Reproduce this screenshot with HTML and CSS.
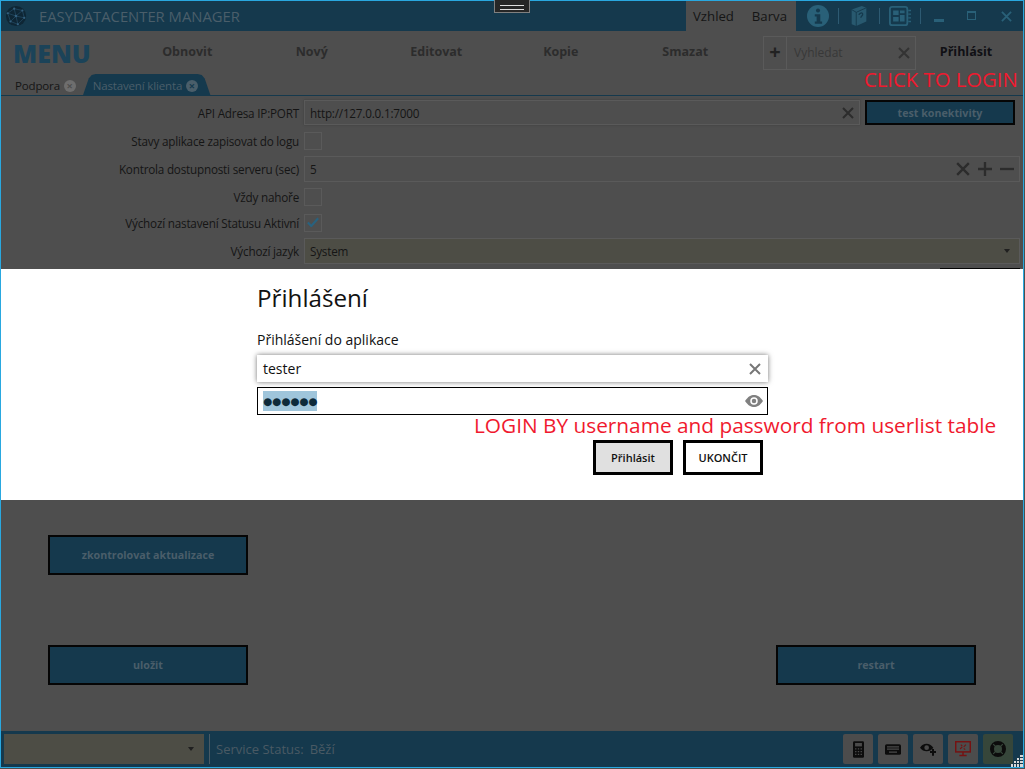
FILE: index.html
```html
<!DOCTYPE html>
<html lang="en">
<head>
    <meta charset="UTF-8">
    <meta name="viewport" content="width=device-width, initial-scale=1.0">
    <title>EasyDataCenter Manager</title>
    <link rel="stylesheet" href="styles.css">
</head>
<body>
    <div class="window">
        <header class="titlebar">
            <svg class="logo" viewBox="0 0 24 24">
                <circle cx="12" cy="12" r="11" fill="#0e2635"/>
                <path d="M3 9 L10 4 L19 6 L21 14 L14 21 L6 18 Z M10 4 L12 12 L19 6 M12 12 L21 14 M12 12 L14 21 M12 12 L6 18 M12 12 L3 9" fill="none" stroke="#244c66" stroke-width=".8"/>
                <circle cx="10" cy="4" r="1.2" fill="#33607f"/><circle cx="19" cy="6" r="1.2" fill="#33607f"/><circle cx="12" cy="12" r="1.4" fill="#33607f"/><circle cx="3" cy="9" r="1.2" fill="#33607f"/><circle cx="21" cy="14" r="1.2" fill="#33607f"/><circle cx="14" cy="21" r="1.2" fill="#33607f"/><circle cx="6" cy="18" r="1.2" fill="#33607f"/>
            </svg>
            <span class="app-name">EASYDATACENTER MANAGER</span>
            <div class="title-tabs">
                <span>Vzhled</span>
                <span>Barva</span>
            </div>
            <div class="title-icons">
                <svg class="ti" viewBox="0 0 24 24"><circle cx="12" cy="12" r="12" fill="#296078"/><circle cx="12" cy="6" r="2.200" fill="#15394d"/><path d="M8.500 10h6v8h2v2.500h-8V18h2v-5.500h-2z" fill="#15394d"/></svg>
                <i class="sep"></i>
                <svg class="ti" viewBox="0 0 24 24"><path d="M4 5 L15 1 L20 3 V18 L9 23 L4 21 Z" fill="#28596f"/><path d="M9 8 L20 3 M4 5 L9 8 V23" stroke="#15394d" fill="none"/><path d="M12 11c0-2 4-3.500 4-1 0 2-2 2-2 4" stroke="#15394d" stroke-width="1.400" fill="none"/></svg>
                <i class="sep"></i>
                <svg class="ti" viewBox="0 0 24 24"><rect x="1" y="2" width="19" height="20" rx="2.500" fill="none" stroke="#296078" stroke-width="2"/><path d="M4.500 6h6v5h-6zM12 6h5v3h-5zM4.500 13h6v5h-6zM12 11h5v7h-5z" fill="#296078"/><path d="M21 6h3M21 10h3M21 14h3M21 18h3" stroke="#296078" stroke-width="1.500"/></svg>
                <i class="sep"></i>
            </div>
            <div class="win-buttons">
                <span class="win-min"></span>
                <span class="win-max"></span>
                <svg class="win-close" viewBox="0 0 12 12"><path d="M1 1l10 10M11 1L1 11" stroke="#296078" stroke-width="2"/></svg>
            </div>
        </header>

        <div class="toolbar">
            <div class="menu-title">MENU</div>
            <nav class="menu-items">
                <span>Obnovit</span>
                <span>Nový</span>
                <span>Editovat</span>
                <span>Kopie</span>
                <span>Smazat</span>
            </nav>
            <div class="search">
                <span class="search-add">+</span>
                <span class="search-text">Vyhledat</span>
                <svg class="x-icon" viewBox="0 0 12 12"><path d="M1 1l10 10M11 1L1 11"/></svg>
            </div>
            <div class="login-link">Přihlásit</div>
        </div>

        <div class="tabs">
            <span class="tab">Podpora <b class="tab-x">×</b></span>
            <span class="tab tab-active">Nastavení klienta <b class="tab-x">×</b></span>
        </div>

        <main class="content">
            <div class="form">
                <label class="row-api">API Adresa IP:PORT</label>
                <div class="row-api api-line">
                    <div class="field field-api">http://127.0.0.1:7000<svg class="x-icon" viewBox="0 0 12 12"><path d="M1 1l10 10M11 1L1 11"/></svg></div>
                    <div class="btn btn-test">test konektivity</div>
                </div>
                <label>Stavy aplikace zapisovat do logu</label>
                <div><span class="check"></span></div>
                <label>Kontrola dostupnosti serveru (sec)</label>
                <div><div class="field field-spin">5
                    <div class="spin-icons">
                        <svg class="x-icon" viewBox="0 0 12 12"><path d="M1 1l10 10M11 1L1 11"/></svg>
                        <svg class="x-icon" viewBox="0 0 12 12"><path d="M0 6h12M6 0v12"/></svg>
                        <svg class="x-icon" viewBox="0 0 12 12"><path d="M0 6h12"/></svg>
                    </div>
                </div></div>
                <label>Vždy nahoře</label>
                <div><span class="check"></span></div>
                <label class="row-status">Výchozí nastavení Statusu Aktivní</label>
                <div class="row-status"><span class="check"><svg viewBox="0 0 14 12"><path d="M1 6.500l4 4L13 1.500" fill="none" stroke="#28627f" stroke-width="2.500"/></svg></span></div>
                <label>Výchozí jazyk</label>
                <div><div class="field field-select">System<span class="arrow"></span></div></div>
                <div class="hidden-btn"></div>
            </div>

            <div class="action-row action-check">
                <div class="btn btn-wide">zkontrolovat aktualizace</div>
            </div>
            <div class="action-row action-save">
                <div class="btn btn-wide">uložit</div>
                <div class="btn btn-wide">restart</div>
            </div>
        </main>

        <footer class="statusbar">
            <div class="status-select"><span class="arrow"></span></div>
            <i class="status-sep"></i>
            <span class="status-text">Service Status:</span>
            <span class="status-text">Běží</span>
            <div class="status-tools">
                <span class="tool"><svg class="tool-calc" viewBox="0 0 16 24"><rect x="0" y="0" width="16" height="24" rx="2" fill="#0c0c0c"/><rect x="3" y="2.500" width="10" height="5" fill="#4a4a4a"/><path d="M3 10h2v2H3zM7 10h2v2H7zM11 10h2v2h-2zM3 14h2v2H3zM7 14h2v2H7zM11 14h2v2h-2zM3 18h2v2H3zM7 18h2v2H7zM11 18h2v2h-2z" fill="#4a4a4a"/></svg></span>
                <span class="tool"><svg class="tool-keys" viewBox="0 0 24 16"><rect width="24" height="16" rx="2.500" fill="#0c0c0c"/><path d="M3 3h18v2H3zM3 6.500h18v2H3zM6 11h12v2H6z" fill="#4a4a4a"/></svg></span>
                <span class="tool"><svg class="tool-eye" viewBox="0 0 24 20"><path d="M0 8C4 1 14-1 20 8c-5 7-15 7-20 0z" fill="#0c0c0c"/><circle cx="10" cy="8" r="3.500" fill="#4a4a4a"/><path d="M18 10h3v3h3v3h-3v4h-3v-4h-3v-3h3z" fill="#0c0c0c"/></svg></span>
                <span class="tool"><svg class="tool-screen" viewBox="0 0 22 22"><rect x="1" y="1" width="20" height="14" fill="none" stroke="#751212" stroke-width="2"/><path d="M7 11l3-3M12 8l3-3M8 5l2 2M12 10l2 2" stroke="#751212" stroke-width="1.500"/><path d="M10 15h2v4h4v2H6v-2h4z" fill="#751212"/></svg></span>
                <span class="tool tool-green"><svg class="tool-ring" viewBox="0 0 20 20"><circle cx="10" cy="10" r="7.500" fill="none" stroke="#0c0c0c" stroke-width="5"/><path d="M4 4l12 12M16 4L4 16" stroke="#36463a" stroke-width="1.500"/></svg></span>
            </div>
            <svg class="grip" viewBox="0 0 12 12"><path d="M9 0h3v2H9zM6 3h2v2H6zM9 3h3v2H9zM3 6h2v2H3zM6 6h2v2H6zM9 6h3v2H9zM0 9h2v3H0zM3 9h2v3H3zM6 9h2v3H6zM9 9h3v3H9z" fill="#d8d8d8"/></svg>
        </footer>

        <div class="grab"></div>

        <div class="dialog">
            <div class="dialog-body">
                <h2>Přihlášení</h2>
                <p>Přihlášení do aplikace</p>
                <div class="login-input login-user">tester<svg class="x-icon" viewBox="0 0 12 12"><path d="M1 1l10 10M11 1L1 11"/></svg></div>
                <div class="login-input login-pass">
                    <span class="dots">●●●●●●</span>
                    <svg class="eye" viewBox="0 0 24 16"><path d="M0 8C4 2 8 0 12 0s8 2 12 8c-4 6-8 8-12 8S4 14 0 8z" fill="#808080"/><circle cx="12" cy="8" r="5" fill="#fff"/><circle cx="12" cy="8" r="3" fill="#808080"/></svg>
                </div>
                <div class="dialog-buttons">
                    <span class="dlg-btn dlg-primary">Přihlásit</span>
                    <span class="dlg-btn">UKONČIT</span>
                </div>
            </div>
        </div>

        <div class="note note-click">CLICK TO LOGIN</div>
        <div class="note note-login">LOGIN BY username and password from userlist table</div>
    </div>
</body>
</html>
```

FILE: styles.css
```css
* {
    box-sizing: border-box;
}
html, body {
    margin: 0;
    height: 100%;
    background: #4e4e4e;
    overflow: hidden;
}
body {
    font-family: "Open Sans", "Noto Sans", sans-serif;
    color: #151515;
}
.window {
    position: relative;
    width: 1024px;
    height: 768px;
    border: 1px solid #29a8e0;
    background: #4e4e4e;
    display: flex;
    flex-direction: column;
}

/* title bar */
.titlebar {
    height: 30px;
    flex: none;
    background: #15394d;
    display: flex;
    align-items: center;
    padding-left: 4px;
}
.logo {
    width: 22px;
    height: 22px;
}
.app-name {
    margin-left: 12px;
    font-size: 14.800px;
    color: #4a5e6a;
}
.title-tabs {
    margin-left: auto;
    height: 30px;
    width: 110px;
    background: #4e4e4e;
    display: flex;
    align-items: center;
    justify-content: space-between;
    padding: 0 9px 0 7px;
    font-size: 13.200px;
}
.title-icons {
    display: flex;
    align-items: center;
    padding-left: 11px;
}
.ti {
    width: 22px;
    height: 22px;
}
.sep {
    width: 1px;
    height: 16px;
    background: #2d5a72;
    margin: 0 9px;
}
.sep:last-child {
    margin-right: 0;
}
.win-buttons {
    width: 102px;
    display: flex;
    align-items: center;
    padding-left: 13px;
}
.win-min {
    width: 10px;
    height: 3px;
    background: #296078;
    margin-top: 9px;
}
.win-max {
    width: 9px;
    height: 9px;
    border: 1px solid #296078;
    border-top-width: 2px;
    margin: -2px 0 0 23px;
}
.win-close {
    width: 11px;
    height: 11px;
    margin-left: 25px;
}

/* toolbar */
.toolbar {
    height: 43px;
    flex: none;
    display: flex;
    align-items: center;
    padding-left: 12px;
}
.menu-title {
    width: 112px;
    font-size: 25px;
    font-weight: 800;
    color: #1b4359;
}
.menu-items {
    width: 625px;
    display: grid;
    grid-template-columns: repeat(5, 124.500px);
    padding-bottom: 2px;
    font-size: 12.500px;
    font-weight: 700;
    color: #2c2c2c;
    text-align: center;
}
.search {
    width: 153px;
    height: 34px;
    margin-left: 13px;
    border: 1px solid #5a5a5a;
    display: flex;
    align-items: center;
    font-size: 12px;
    color: #383838;
}
.search-add {
    width: 23px;
    height: 32px;
    border-right: 1px solid #5a5a5a;
    text-align: center;
    font-size: 20px;
    line-height: 30px;
    font-weight: 700;
    color: #222;
}
.search-text {
    margin-left: 7px;
}
.x-icon {
    width: 12px;
    height: 12px;
    margin-left: auto;
    stroke: #2c2c2c;
    stroke-width: 2;
    fill: none;
}
.search .x-icon {
    margin-right: 5px;
    stroke: #333;
}
.login-link {
    width: 100px;
    padding-bottom: 2px;
    text-align: center;
    font-size: 12.500px;
    font-weight: 700;
    color: #101014;
}

/* tabs */
.tabs {
    height: 22px;
    flex: none;
    display: flex;
    align-items: flex-end;
    border-bottom: 1px solid #15394d;
    padding-left: 14px;
    font-size: 11.500px;
    letter-spacing: -.15px;
}
.tab {
    height: 22px;
    line-height: 24px;
    margin-right: 7px;
    margin-bottom: -1px;
}
.tab-x {
    display: inline-block;
    width: 12px;
    height: 12px;
    border-radius: 50%;
    background: #6e6e6e;
    color: #4e4e4e;
    font-size: 11px;
    line-height: 11px;
    letter-spacing: 0;
    text-align: center;
    margin-left: 1px;
}
.tab-active {
    width: 128px;
    background: #15394d;
    color: #4a5e6a;
    padding-left: 10px;
    white-space: nowrap;
    clip-path: polygon(0 100%, 6px 20%, 9px 5%, 13px 0, calc(100% - 13px) 0, calc(100% - 9px) 5%, calc(100% - 6px) 20%, 100% 100%);
}
.tab-active .tab-x {
    background: #4a5e6a;
    color: #15394d;
}

/* settings form */
.content {
    flex: 1;
    padding-top: 4px;
}
.form {
    display: grid;
    grid-template-columns: 298px 1fr;
    column-gap: 5px;
    row-gap: 6px;
    align-items: center;
    font-size: 11.700px;
    letter-spacing: -.2px;
    padding-right: 3px;
}
.form label {
    text-align: right;
    line-height: 16px;
}
.row-status {
    margin-top: 2px;
}
.hidden-btn {
    grid-column: 2;
    justify-self: end;
    width: 80px;
    height: 2px;
    margin-top: -3px;
    background: #050505;
}
.field {
    height: 26px;
    padding: 0 5px 0 5px;
    border: 1px solid #5a5a5a;
    background: #4e4e4e;
    display: flex;
    align-items: center;
    flex: 1;
}
.api-line {
    display: flex;
    gap: 5px;
    height: 26px;
    padding-right: 5px;
}
.field-api {
    height: 25px;
    box-shadow: 0 0 2px #3c3c3c;
}
.spin-icons {
    margin-left: auto;
    display: flex;
    gap: 8px;
}
.spin-icons .x-icon {
    width: 14px;
    height: 14px;
}
.field-select {
    background: #4d4d45;
}
.arrow {
    margin-left: auto;
    margin-right: 4px;
    border-left: 3.500px solid transparent;
    border-right: 3.500px solid transparent;
    border-top: 4px solid #202020;
}
.check {
    display: block;
    width: 18px;
    height: 18px;
    border: 1px solid #5a5a5a;
    padding: 2px;
}
.check svg {
    display: block;
}
.btn {
    background: #15394d;
    border: 2px solid #050505;
    color: #4a5e6a;
    font-size: 10.700px;
    font-weight: 700;
    letter-spacing: 0;
    display: flex;
    align-items: center;
    justify-content: center;
}
.btn-test {
    width: 150px;
    height: 25px;
    flex: none;
}
.btn-wide {
    width: 200px;
    height: 40px;
}
.action-row {
    display: flex;
    justify-content: space-between;
    padding: 0 47px;
}
.action-check {
    margin-top: 265px;
}
.action-save {
    margin-top: 70px;
}

/* status bar */
.statusbar {
    height: 36px;
    flex: none;
    background: #15394d;
    display: flex;
    align-items: center;
    padding-left: 3px;
    font-size: 13px;
    color: #4a5a64;
    position: relative;
}
.status-select {
    width: 200px;
    height: 30px;
    background: #4d4d45;
    display: flex;
    align-items: center;
    justify-content: flex-end;
    padding-right: 5px;
}
.status-select .arrow {
    margin-right: 5px;
}
.status-sep {
    width: 1px;
    height: 30px;
    background: #4a5a64;
    margin: 0 6px 0 5px;
}
.status-text {
    margin-right: 6px;
}
.status-tools {
    margin-left: auto;
    margin-right: 10px;
    display: flex;
    gap: 5px;
}
.tool {
    width: 30px;
    height: 30px;
    border-radius: 2px;
    background: #4c4c4c;
    display: flex;
    align-items: center;
    justify-content: center;
}
.tool-calc {
    width: 11px;
    height: 17px;
}
.tool-keys {
    width: 16px;
    height: 11px;
}
.tool-eye {
    width: 16px;
    height: 14px;
}
.tool-screen {
    width: 16px;
    height: 16px;
}
.tool-ring {
    width: 16px;
    height: 16px;
}
.tool-green {
    background: #36463a;
}
.grip {
    position: absolute;
    right: 0;
    bottom: 0;
    width: 12px;
    height: 12px;
}

/* drag handle at the top edge */
.grab {
    position: absolute;
    left: 493px;
    top: -1px;
    width: 36px;
    height: 13px;
    background: #262626;
    border: 1px solid #808080;
    border-top: none;
}
.grab::after {
    content: "";
    position: absolute;
    left: 5px;
    right: 5px;
    top: 5px;
    height: 3px;
    border-top: 1px solid #ddd;
    border-bottom: 1px solid #ddd;
}

/* login dialog */
.dialog {
    position: absolute;
    left: 0;
    right: 0;
    top: 268px;
    height: 231px;
    background: #fff;
}
.dialog-body {
    width: 511px;
    margin-left: 256px;
    padding-top: 13px;
}
.dialog h2 {
    margin: 0;
    font-size: 24.200px;
    font-weight: 400;
    line-height: 32px;
    color: #111;
}
.dialog p {
    margin: 16px 0 5px;
    font-size: 14px;
    line-height: 20px;
    color: #111;
}
.login-input {
    height: 27px;
    padding: 0 7px 0 6px;
    display: flex;
    align-items: center;
    font-size: 14px;
    color: #111;
}
.login-user {
    box-shadow: 0 0 5px rgba(0, 0, 0, .55);
}
.login-user .x-icon {
    stroke: #777;
}
.login-pass {
    margin-top: 5px;
    height: 28px;
    border: 1px solid #000;
    padding: 0 4px 0 5px;
}
.dots {
    background: #9fc5db;
    color: #0d2a3a;
    font-size: 10.400px;
    line-height: 20px;
    font-family: "DejaVu Sans", sans-serif;
}
.eye {
    width: 18px;
    height: 12px;
    margin-left: auto;
}
.dialog-buttons {
    display: flex;
    justify-content: flex-end;
    gap: 10px;
    margin-top: 25px;
    padding-right: 5px;
}
.dlg-btn {
    width: 80px;
    height: 35px;
    border: 3px solid #000;
    display: flex;
    align-items: center;
    justify-content: center;
    font-size: 11px;
    font-weight: 600;
    color: #111;
}
.dlg-primary {
    background: #e0e0e0;
}

/* red annotations pasted over the screenshot */
.note {
    position: absolute;
    color: #f0192e;
    white-space: nowrap;
}
.note-click {
    left: 863px;
    top: 65px;
    font-size: 20.300px;
    line-height: 26px;
}
.note-login {
    left: 473px;
    top: 410px;
    font-size: 20.800px;
    line-height: 28px;
}
```
